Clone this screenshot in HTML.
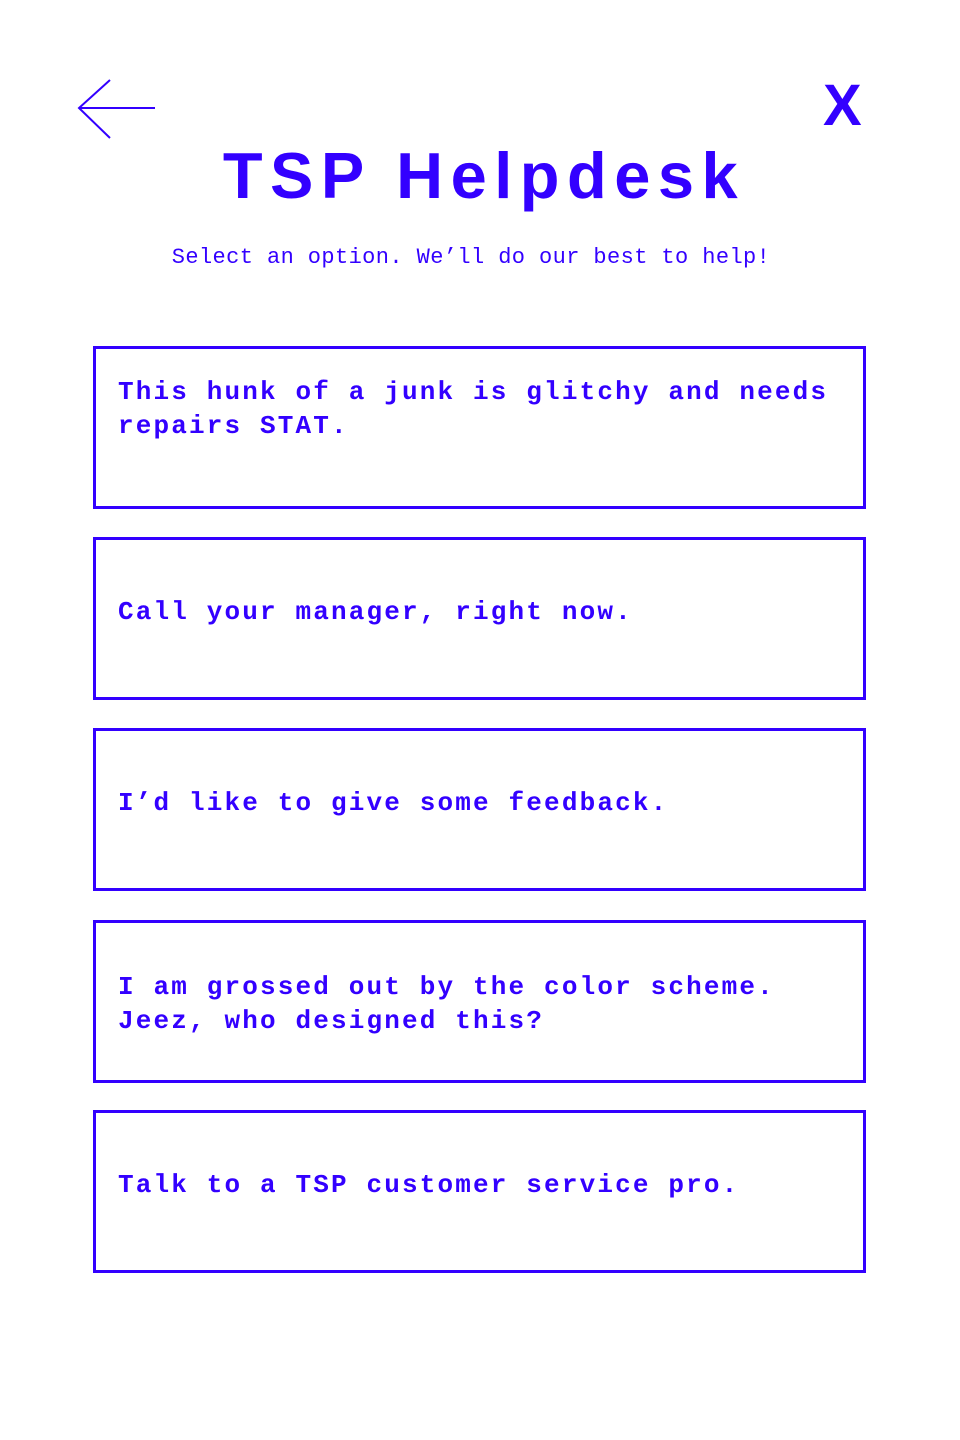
<!DOCTYPE html>
<html><head><meta charset="utf-8"><style>
body{margin:0;width:960px;height:1440px;background:#fff;position:relative;overflow:hidden;color:#3300ff}
.t{position:absolute;left:4px;width:960px;text-align:center;font-family:"Liberation Sans",sans-serif;font-weight:bold;font-size:65px;letter-spacing:7.5px;top:138px;line-height:76px}
.s{position:absolute;left:-9px;width:960px;text-align:center;font-family:"Liberation Mono",monospace;font-size:22px;letter-spacing:0.4px;top:245px}
.x{position:absolute;left:823px;top:74px;font-family:"Liberation Sans",sans-serif;font-weight:bold;font-size:58px;line-height:64px}
.b{position:absolute;left:93px;width:767px;height:157px;border:3px solid #3300ff;font-family:"Liberation Mono",monospace;font-weight:bold;font-size:26px;letter-spacing:2.15px;line-height:34px;box-sizing:content-box}
.b div{position:absolute;left:22px;right:4px}
</style></head><body>
<svg style="position:absolute;left:0;top:0" width="200" height="160"><path d="M110 80 L79 108 L110 138 M79 108 L155 108" fill="none" stroke="#3300ff" stroke-width="2"/></svg>
<div class="x">X</div>
<div class="t">TSP Helpdesk</div>
<div class="s">Select an option. We’ll do our best to help!</div>
<div class="b" style="top:346px"><div style="top:26px">This hunk of a junk is glitchy and needs repairs STAT.</div></div>
<div class="b" style="top:537px"><div style="top:55px">Call your manager, right now.</div></div>
<div class="b" style="top:728px"><div style="top:55px">I’d like to give some feedback.</div></div>
<div class="b" style="top:920px"><div style="top:47px">I am grossed out by the color scheme. Jeez, who designed this?</div></div>
<div class="b" style="top:1110px"><div style="top:55px">Talk to a TSP customer service pro.</div></div>
</body></html>
